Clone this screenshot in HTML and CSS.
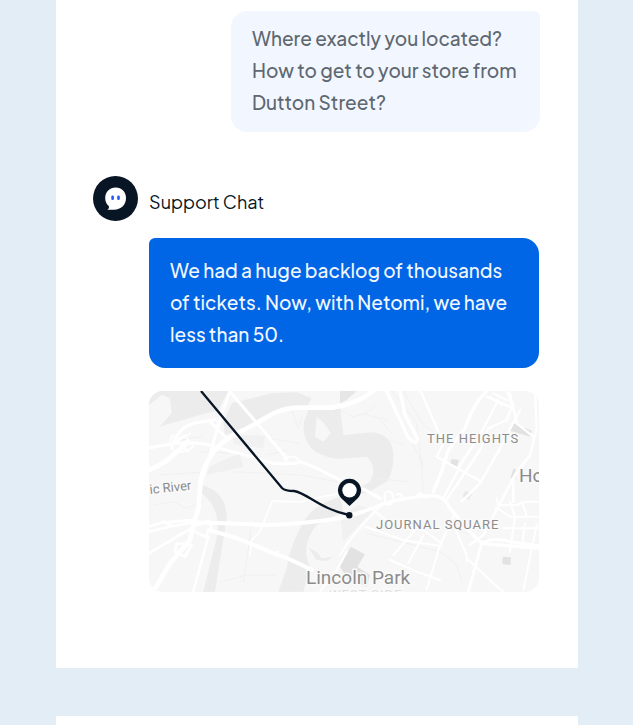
FILE: index.html
```html
<!DOCTYPE html>
<html lang="en">
<head>
<meta charset="utf-8">
<meta name="viewport" content="width=device-width, initial-scale=1">
<title>Support Chat</title>
<link rel="stylesheet" href="styles.css">
</head>
<body>
<main class="page">
  <section class="card chat">
    <p class="bubble bubble-user">Where exactly you located?<br>How to get to your store from<br>Dutton Street?</p>
    <header class="sender">
      <svg class="avatar" viewBox="0 0 45 45" aria-hidden="true">
        <circle cx="22.5" cy="22.5" r="22.5" fill="#071524"/>
        <path d="M22.7 11.5C28.700 11.500 33 16 33 22C33 29 28 33.500 21 33.700H14.300C15.800 32.800 16.300 31.700 15.800 30C13.400 28 12.200 25.500 12.200 22C12.200 16 16.700 11.500 22.700 11.500Z" fill="#fff"/>
        <rect x="18.300" y="19.500" width="2.600" height="4.500" rx="1.300" fill="#2456f5"/>
        <rect x="24.200" y="19.500" width="2.600" height="4.500" rx="1.300" fill="#2456f5"/>
      </svg>
      <h2 class="sender-name">Support Chat</h2>
    </header>
    <div class="reply">
      <p class="bubble bubble-agent">We had a huge backlog of thousands<br>of tickets. Now, with Netomi, we have<br>less than 50.</p>
      <svg class="map" viewBox="0 0 390 201" role="img" aria-label="Route to the store">
        <rect width="390" height="201" fill="#f7f7f7"/>
        <g transform="translate(-9 -6) scale(.33333)" fill="none" stroke-linecap="round" stroke-linejoin="round">
          <g fill="#ececec">
            <path d="M27 18H265L235 75L150 98L58 125L95 85L90 40L65 30L40 50L27 60Z"/>
            <path d="M275 55L400 24L470 22L515 40L495 75L430 70L375 95L290 140L255 150L250 110Z"/>
            <path d="M505 75L600 65L610 150L700 142Q755 150 760 205Q762 260 740 290L680 325L625 328L690 290Q715 245 680 215L590 222Q530 210 510 185Q485 150 492 110Z"/>
            <path d="M530 95L550 112L573 145L550 170L525 155Z" fill="#f7f7f7"/>
            <path d="M315 150L375 152L370 190L282 178L278 160Z" fill="#f1f1f1"/>
            <path d="M210 245L270 215L300 208L310 245L200 270Z" fill="#f0f0f0"/>
            <path d="M185 300Q260 320 260 400L225 620H190L230 460Q245 370 185 325Z"/>
            <path d="M600 335Q510 360 480 430Q445 500 440 550L415 620H490L510 545Q480 480 530 420L610 380Z"/>
            <path d="M505 488L530 500L545 520L580 515L560 528L530 525Z"/>
            <path d="M600 18H650L620 45L600 55Z" fill="#e6e6e6"/>
            <path d="M600 395L655 360L700 375L610 470Z" fill="#f1f1f1"/>
          </g>
          <g fill="#e2e2e2">
            <path d="M632 485L675 508L652 545L690 570L680 605L625 585L600 545Z"/>
            <path d="M1120 115L1175 137L1170 155L1110 137Z"/>
            <path d="M935 222L957 225L950 246L928 240Z"/>
            <path d="M1120 250L1133 257L1126 283L1112 278Z"/>
            <path d="M975 318L998 324L986 345L968 335Z" fill="#e9e9e9"/>
            <path d="M1088 515L1113 517L1111 540L1087 537Z"/>
          </g>
          <g stroke="#f0f0f0" stroke-width="3">
            <path d="M600 75L640 95L680 85L705 60M680 90L740 105M720 105L755 145M740 18L850 240M755 18L830 115L845 240L850 330M750 165L790 180M840 225L845 245M710 280L800 290"/>
            <path d="M60 270L180 262M390 160L480 175M380 210L440 195M40 360L100 350L140 370L190 350M335 420L310 590M245 590L320 570L410 570M680 445L900 500L950 540L970 600M930 430L1060 470M790 18L850 120L900 155"/>
            <path d="M450 60L475 130L488 90M180 200L270 205M120 165L185 155M280 260L480 270L590 290"/>
          </g>
          <g stroke="#fff">
            <path stroke-width="14" d="M27 255Q75 235 100 210L145 170M180 315Q180 270 205 225Q235 170 300 140C370 110 400 68 480 68H575Q650 58 700 18M180 315L175 370L160 420L150 465L90 535L40 620"/>
            <path stroke-width="9" d="M27 188L110 175C210 165 250 200 300 205L400 235Q470 240 480 230L520 245L600 285M95 190Q110 130 160 115L220 105M270 20L245 85L215 190L185 290M270 20L330 90L440 220M215 115L260 160"/>
            <path stroke-width="5" d="M100 150Q85 165 95 190Q120 215 160 185L135 150L100 170M110 165L145 200M95 180L150 145M225 100L240 125L210 115M430 220Q470 205 480 232Q450 245 430 220"/>
            <path stroke-width="12" d="M160 412L230 414L380 420Q480 418 600 400L670 380M205 435Q290 455 400 505Q450 520 515 555"/>
            <path stroke-width="8" d="M27 425L70 412L160 405M27 440L90 425L160 412M27 505L170 420M175 420L205 408L215 430L195 455L165 440M150 480L110 475L105 500L135 515L155 480M205 455L160 620M70 410L100 423"/>
            <path stroke-width="5" d="M330 510L335 465L360 440L397 348L480 351L550 335L600 325M400 505L415 500M335 480L322 475"/>
            <path stroke-width="10" d="M740 18L805 158Q835 185 832 160L795 90L780 18M1040 18Q1000 55 975 130L925 195L905 260L880 320M670 312L720 340M670 380L735 355Q800 335 880 332Q915 335 930 370L980 430L1025 475L1195 490"/>
            <path stroke-width="9" d="M1025 475L1010 530L985 620M1025 475Q1060 455 1110 470L1195 482"/>
            <path stroke-width="7" d="M842 18L910 175L890 215L1025 290M1075 45L1020 150L970 225L910 340M1120 55L1100 105L1045 130L1020 195L950 300L915 350M1140 75L1080 190L1020 295L965 350M1185 18L1190 130L1170 210L1120 280L1120 350M1100 18L1120 70L1040 35M1110 25L1130 115L1180 155M1170 210L1130 260L1030 450L990 480"/>
            <path stroke-width="6" d="M600 510Q635 450 700 385L735 350M735 350Q730 315 750 320Q770 335 750 360L725 355M770 330Q785 320 785 335M830 338Q840 310 855 338M700 375L750 415L850 435L905 475M675 425L790 465L905 484M830 430L760 510M850 450L805 535M750 525L830 560L900 585M945 385L900 480L860 615"/>
            <path stroke-width="6" d="M1070 340L1075 360L1130 360L1160 350H1195M1065 370L1080 375L1110 395H1195M1110 350L1125 395L1110 500M1145 350L1160 390M1155 415L1145 490M1090 430H1195M1190 420L1150 615M980 520L1060 595L1090 620M945 430L980 510L980 530M540 620L590 555L620 500M1050 35L1085 60M1060 25L1100 45"/>
          </g>
        </g>
        <g class="map-labels">
          <text class="place" x="278" y="52">THE HEIGHTS</text>
          <text class="place" x="227" y="138">JOURNAL SQUARE</text>
          <text class="place faint" x="180" y="208">WEST SIDE</text>
          <text class="town" x="157" y="193">Lincoln Park</text>
          <text class="town" x="370" y="91">Ho</text>
          <text class="water" transform="translate(1 103) rotate(-6)">ic River</text>
        </g>
        <path d="M52 0L133 97Q136 100 145 100C158 102 171 118 200 124" fill="none" stroke="#071524" stroke-width="2.300"/>
        <circle cx="200.300" cy="124.300" r="3.200" fill="#071524"/>
        <path fill="#071524" d="M200.500 115L192.500 107.500C190 105 189 102.500 189 99.300A11.500 11.500 0 0 1 212 99.300C212 102.500 211 105 208.500 107.500Z"/>
        <circle cx="200.500" cy="99.300" r="7.200" fill="#fff"/>
      </svg>
    </div>
  </section>
  <section class="card next-card"></section>
</main>
</body>
</html>
```
FILE: styles.css
```css
* {
  box-sizing: border-box;
}

body {
  margin: 0;
  background: #e3edf6;
  color: #071524;
  font-family: "Plus Jakarta Sans", Inter, sans-serif;
}

.page {
  display: flex;
  flex-direction: column;
  gap: 48px;
  height: 100vh;
  padding: 0 55px 0 56px;
  overflow: hidden;
}

.card {
  background: #fff;
}

.chat {
  display: flex;
  flex-direction: column;
  flex-shrink: 0;
  padding: 11px 38px 76px 37px;
}

.next-card {
  flex: 1;
}

.bubble {
  margin: 0;
  font-size: 19px;
  font-weight: 500;
  line-height: 32px;
  white-space: nowrap;
}

.bubble-user {
  align-self: flex-end;
  width: 309px;
  padding: 11px 21px 14px;
  border-radius: 16px 6px 16px 16px;
  background: #f2f7ff;
  color: #5f6871;
}

.sender {
  display: flex;
  align-items: center;
  gap: 11px;
  margin-top: 44px;
}

.avatar {
  width: 45px;
  height: 45px;
}

.sender-name {
  margin: 0;
  padding-top: 6px;
  font-size: 18px;
  font-weight: 400;
  line-height: 24px;
}

.reply {
  display: flex;
  flex-direction: column;
  gap: 23px;
  margin: 17px 1px 0 56px;
}

.bubble-agent {
  padding: 16px 21px 18px;
  border-radius: 6px 16px 16px 16px;
  background: #0066e6;
  color: #f2f7ff;
}

.map {
  display: block;
  width: 100%;
  border-radius: 14px;
}

.map-labels {
  fill: #8c8c8c;
  stroke: #fafafa;
  stroke-width: 3px;
  paint-order: stroke;
  font-family: Roboto, sans-serif;
}

.place {
  font-size: 13px;
  letter-spacing: 1px;
}

.faint {
  fill: #dedede;
}

.town {
  font-size: 19px;
}

.water {
  font-size: 13px;
}
```
